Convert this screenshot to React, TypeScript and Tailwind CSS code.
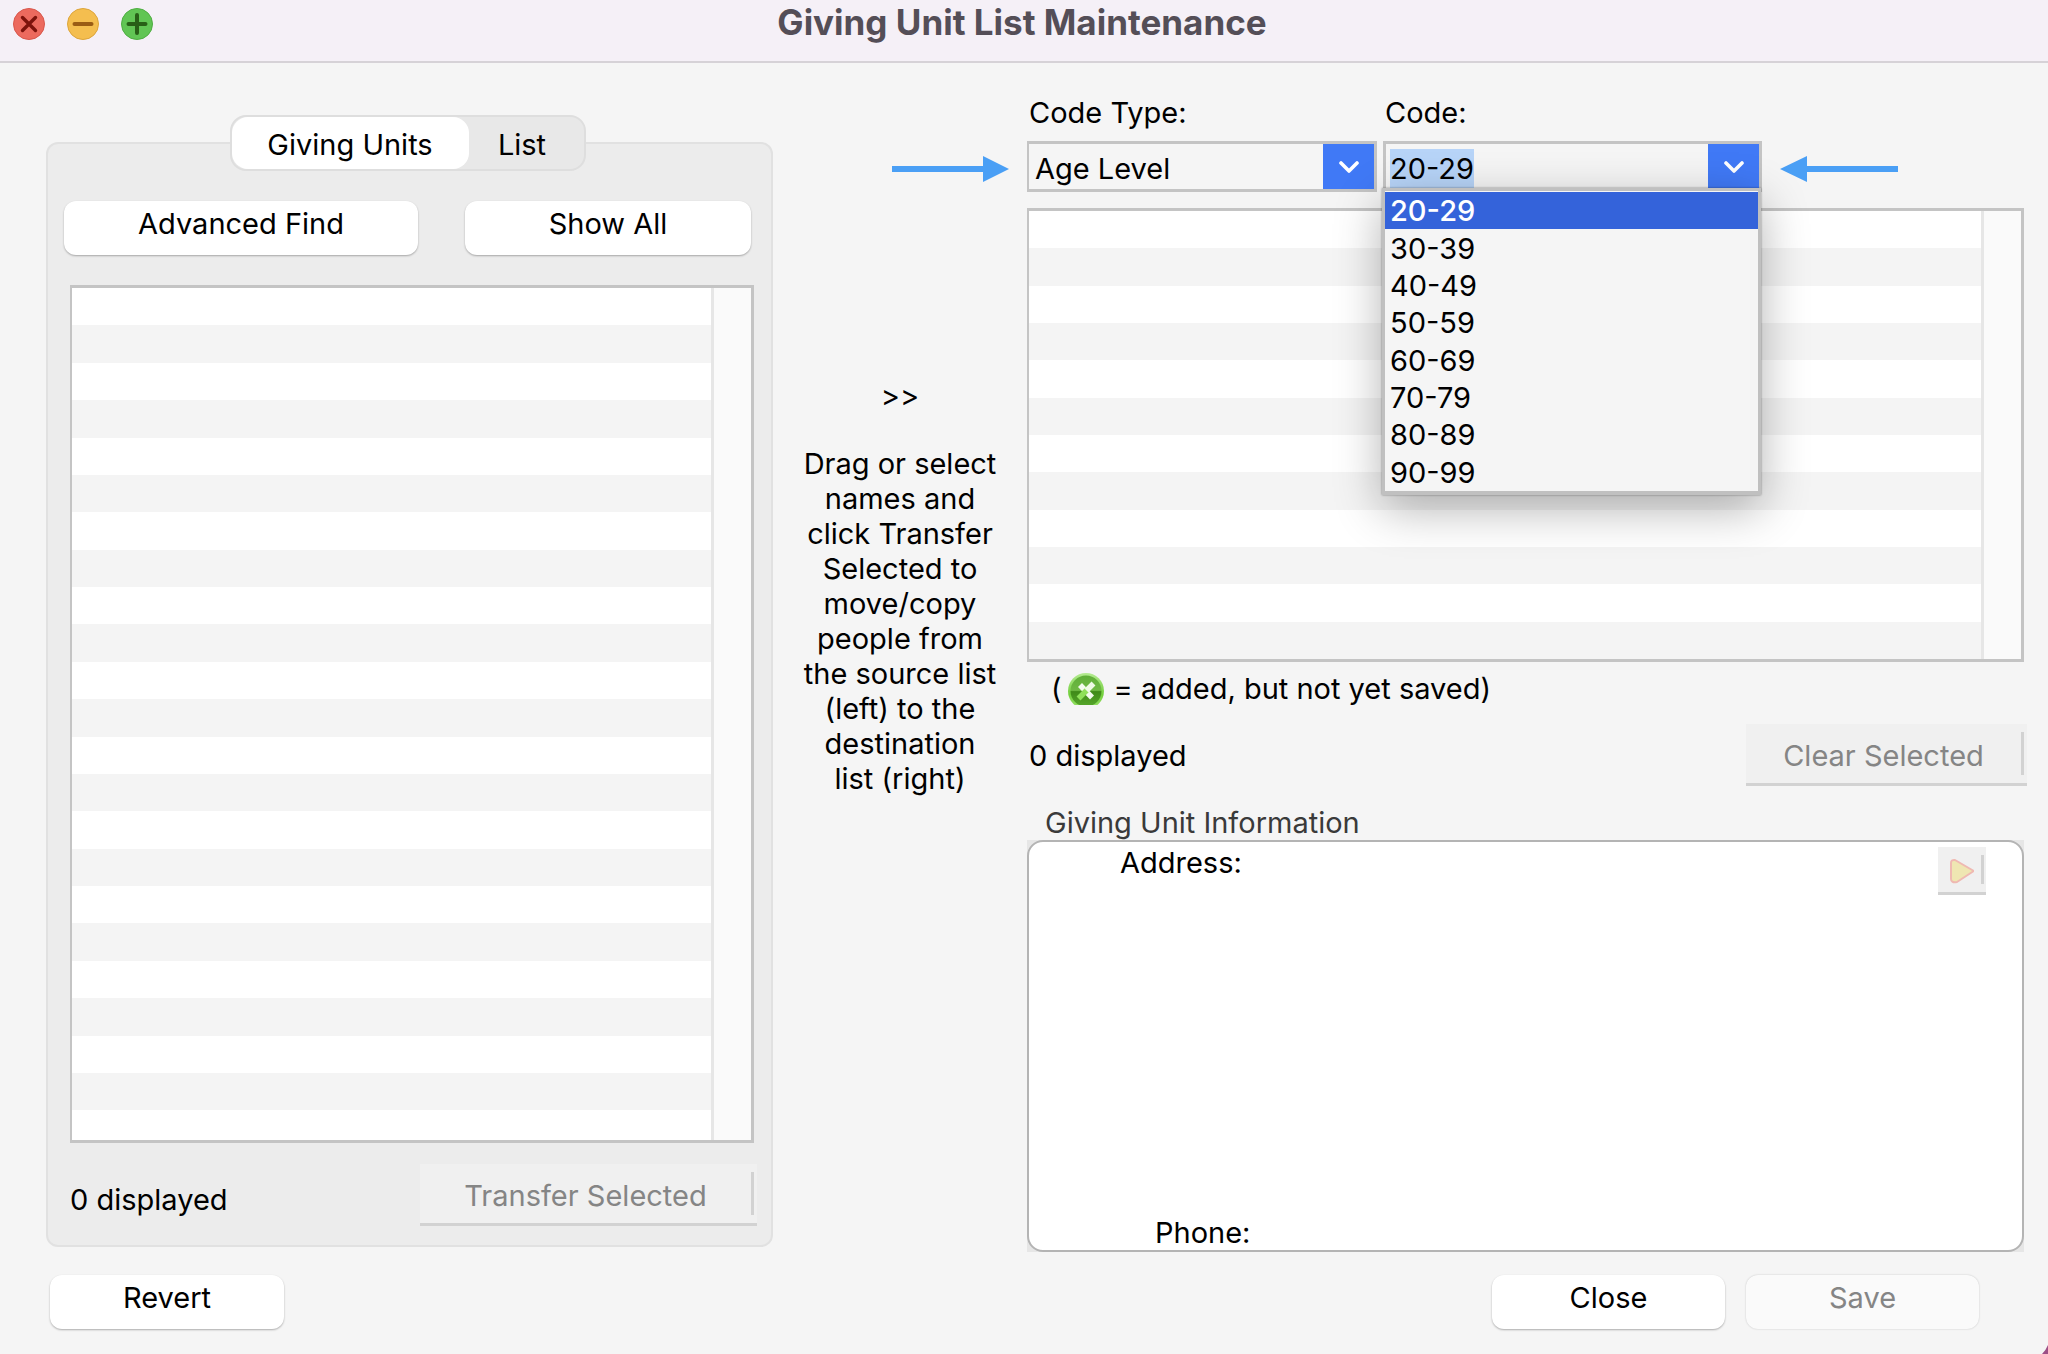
import { useEffect, useRef } from "react";
import type { ReactNode } from "react";

const ages = ["20-29", "30-39", "40-49", "50-59", "60-69", "70-79", "80-89", "90-99"];

function TrafficLights() {
  return (
    <div className="flex gap-[22px]">
      <button aria-label="Close window" className="size-8">
        <svg viewBox="0 0 32 32" className="size-8">
          <circle cx="16" cy="16" r="15.5" fill="#ec6a5e" stroke="#d8574c" />
          <path d="M9.500 9.500l13 13M22.500 9.500l-13 13" stroke="#7d130c" strokeWidth="3.400" strokeLinecap="round" />
        </svg>
      </button>
      <button aria-label="Minimize window" className="size-8">
        <svg viewBox="0 0 32 32" className="size-8">
          <circle cx="16" cy="16" r="15.5" fill="#f4be4f" stroke="#dda53b" />
          <path d="M7.500 16h17" stroke="#9a5c14" strokeWidth="4" strokeLinecap="round" />
        </svg>
      </button>
      <button aria-label="Zoom window" className="size-8">
        <svg viewBox="0 0 32 32" className="size-8">
          <circle cx="16" cy="16" r="15.5" fill="#61c554" stroke="#4fae42" />
          <path d="M7.500 16h17M16 7v18" stroke="#286017" strokeWidth="4" strokeLinecap="round" />
        </svg>
      </button>
    </div>
  );
}

function PushButton({ children, className, disabled }: { children: ReactNode; className: string; disabled?: boolean }) {
  return (
    <button
      disabled={disabled}
      className={`flex h-[54px] items-start justify-center rounded-xl bg-white pt-[5px] shadow-[0_1px_2px_rgba(0,0,0,0.3)] disabled:bg-[#fafafa] disabled:text-[#858585] disabled:shadow-[0_0_2px_rgba(0,0,0,0.2)] ${className}`}
    >
      {children}
    </button>
  );
}

function FlatButton({ children, className }: { children: ReactNode; className: string }) {
  return (
    <button
      disabled
      className={`flex items-stretch border-b-[3px] border-[#d2d2d2] bg-[#f0f0f0] py-2 pr-[3px] text-[#858585] ${className}`}
    >
      <span className="flex flex-1 items-center justify-center border-r-[3px] border-[#d2d2d2] pt-1">{children}</span>
    </button>
  );
}

function StripedList({ weights, className }: { weights: string[]; className: string }) {
  return (
    <div className={`flex border-[3px] border-[#c4c4c4] border-l-2 bg-white ${className}`}>
      <div className="flex flex-1 flex-col">
        {weights.map((w, i) => (
          <div key={i} className={`${w} ${i % 2 ? "bg-[#f4f4f4]" : "bg-white"}`} />
        ))}
      </div>
      <div className="w-10 border-l-[3px] border-[#e6e6e6] bg-[#fafafa]" />
    </div>
  );
}

function Chevron() {
  return (
    <svg viewBox="0 0 20 12" className="h-3 w-5" fill="none" stroke="#fff" strokeWidth="3.600" strokeLinecap="round" strokeLinejoin="round">
      <path d="M2 2l8 8 8-8" />
    </svg>
  );
}

function AddedIcon() {
  return (
    <svg viewBox="0 0 36 32" className="h-8 w-9" aria-label="added">
      <defs>
        <linearGradient id="rim" x1="0" y1="0" x2="0" y2="1">
          <stop offset="0" stopColor="#b5eb92" />
          <stop offset="0.600" stopColor="#72cf3c" />
          <stop offset="1" stopColor="#9be26c" />
        </linearGradient>
        <linearGradient id="core" x1="0" y1="0" x2="0" y2="1">
          <stop offset="0" stopColor="#5fae38" />
          <stop offset="0.480" stopColor="#6fb944" />
          <stop offset="0.520" stopColor="#3f8a18" />
          <stop offset="1" stopColor="#57a82c" />
        </linearGradient>
      </defs>
      <circle cx="18" cy="18" r="18" fill="url(#rim)" />
      <circle cx="18" cy="18" r="15.5" fill="url(#core)" />
      <path d="M12 12l12 12.500" stroke="#f3fbee" strokeWidth="5.500" strokeLinecap="butt" />
      <path d="M10.500 25.500l9-9" stroke="#8fe05a" strokeWidth="5.500" strokeLinecap="butt" />
      <path d="M18.500 17.500l7-7" stroke="#eefae5" strokeWidth="5.500" strokeLinecap="butt" />
    </svg>
  );
}

export default function App() {
  const code = useRef<HTMLInputElement>(null);
  useEffect(() => {
    code.current?.focus();
    code.current?.select();
  }, []);

  return (
    <div className="relative flex min-h-screen flex-col bg-[#f5f5f5] font-['Inter',sans-serif] text-[29px] leading-[35px] text-black">
      <header className="grid h-[63px] grid-cols-[1fr_auto_1fr] items-start border-b-2 border-[#d6d2d7] bg-[#f5f0f7] px-[13px]">
        <div className="pt-2">
          <TrafficLights />
        </div>
        <h1 className="pt-0.5 pr-1 text-[35px] leading-[40px] font-bold text-[#544e57]">Giving Unit List Maintenance</h1>
      </header>

      <main className="grid flex-1 grid-cols-[727fr_254fr_997fr] pr-6 pl-[46px]">
        <section className="flex flex-col pt-[52px] pb-[5px]">
          <div role="tablist" className="relative z-10 mr-1 -mb-[29px] flex h-14 self-center rounded-2xl border-2 border-[#dedede] bg-[#e8e8e8]">
            <button role="tab" aria-selected="true" className="w-[237px] rounded-2xl bg-white pt-0.5">
              Giving Units
            </button>
            <button role="tab" aria-selected="false" className="w-[115px] pt-0.5 pr-2">
              List
            </button>
          </div>
          <div className="flex flex-1 flex-col rounded-xl border-2 border-[#e1e1e1] bg-[#ececec] pt-[57px] pr-3 pb-[19px] pl-4">
            <div className="grid grid-cols-[354fr_286fr] gap-[47px] pr-2">
              <PushButton className="">Advanced Find</PushButton>
              <PushButton className="">Show All</PushButton>
            </div>
            <StripedList weights={[...Array<string>(22).fill("flex-[5]"), "flex-[4]"]} className="mt-[30px] mr-[5px] ml-1.5 flex-1" />
            <div className="mt-[21px] mr-0.5 flex h-[62px] items-center justify-between pl-1.5">
              <span className="pt-2">0 displayed</span>
              <FlatButton className="h-[62px] w-[337px]">Transfer Selected</FlatButton>
            </div>
          </div>
        </section>

        <section className="flex flex-col items-center pt-[93px]">
          <svg viewBox="0 0 117 26" className="mr-[18px] h-[26px] w-[117px] self-end" fill="#4a9ff5">
            <path d="M0 10h91V0l26 13-26 13V16H0z" />
          </svg>
          <p className="mt-[196px]">&gt;&gt;</p>
          <p className="mt-[33px] text-center">
            Drag or select
            <br />
            names and
            <br />
            click Transfer
            <br />
            Selected to
            <br />
            move/copy
            <br />
            people from
            <br />
            the source list
            <br />
            (left) to the
            <br />
            destination
            <br />
            list (right)
          </p>
        </section>

        <section className="flex flex-col pt-8">
          <div className="flex items-end">
            <div className="flex w-[350px] flex-col gap-[11px]">
              <label htmlFor="code-type" className="pl-0.5">
                Code Type:
              </label>
              <div className="relative flex h-[51px] border-[3px] border-[#c4c4c4] border-l-2">
                <select id="code-type" className="flex-1 appearance-none bg-[#f5f5f5] pt-1 pl-1.5">
                  <option>Age Level</option>
                </select>
                <span className="pointer-events-none absolute inset-y-0 right-0 flex w-[51px] items-center justify-center bg-[#4079f6]">
                  <Chevron />
                </span>
              </div>
            </div>
            <div className="ml-1.5 flex w-[379px] flex-col gap-[11px]">
              <label htmlFor="code" className="pl-0.5">
                Code:
              </label>
              <div className="relative flex h-[51px] border-[3px] border-[#c4c4c4]">
                <input
                  ref={code}
                  id="code"
                  role="combobox"
                  aria-expanded="true"
                  aria-controls="code-list"
                  defaultValue="20-29"
                  className="min-w-0 flex-1 bg-[#f5f5f5] pt-1 pl-1 leading-[40px] outline-none selection:bg-[#b7d4f8] selection:text-black"
                />
                <button aria-label="Toggle code list" className="flex w-[51px] items-center justify-center bg-[#4079f6]">
                  <Chevron />
                </button>
                <ul
                  id="code-list"
                  role="listbox"
                  className="absolute top-11 -right-0.5 -left-1 z-20 flex h-[307px] flex-col border-[3px] border-b-4 border-[#c0c0c0] bg-[#f5f5f5] pt-px shadow-[0_0_2px_rgba(0,0,0,0.4),0_14px_44px_rgba(0,0,0,0.3)]"
                >
                  {ages.map((a, i) => (
                    <li
                      key={a}
                      role="option"
                      aria-selected={i === 0}
                      className={i === 0 ? "flex flex-1 items-center bg-[#3463da] pl-[5px] font-medium text-white" : "flex flex-1 items-center pl-[5px]"}
                    >
                      {a}
                    </li>
                  ))}
                </ul>
              </div>
            </div>
            <svg viewBox="0 0 118 26" className="mb-[10px] ml-[18px] h-[26px] w-[118px]" fill="#4a9ff5">
              <path d="M118 10H27V0L0 13l27 13V16h91z" />
            </svg>
          </div>

          <StripedList weights={Array<string>(12).fill("flex-1")} className="mt-4 h-[454px]" />

          <div className="mt-[9px] flex pl-6">
            <span>(</span>
            <span className="mr-2.5 ml-1.5 pt-0.5">
              <AddedIcon />
            </span>
            <span>= added, but not yet saved)</span>
          </div>

          <div className="mt-[18px] -mr-[3px] flex h-[62px] items-center justify-between pl-0.5">
            <span>0 displayed</span>
            <FlatButton className="h-[62px] w-[281px]">Clear Selected</FlatButton>
          </div>

          <h2 className="mt-[19px] pl-[18px] text-[#3a3a3a]">Giving Unit Information</h2>
          <div className="flex flex-1 bg-[#e6e6e6]">
            <div className="flex flex-1 justify-between rounded-2xl border-2 border-[#b4b4b4] bg-white pt-[3px] pr-9">
              <div className="flex flex-col justify-between">
                <span className="pl-[91px]">Address:</span>
                <span className="pl-[126px]">Phone:</span>
              </div>
              <button disabled aria-label="Go to giving unit" className="mt-0.5 flex h-12 w-12 border-b-[3px] border-[#d2d2d2] bg-[#f0f0f0] py-2 pr-0.5">
                <span className="flex flex-1 items-center justify-center border-r-[3px] border-[#d2d2d2] pt-0.5 pl-1">
                  <svg viewBox="0 0 26 26" className="size-[26px]">
                    <path d="M2 5Q2 1.500 6 2L24 12.500 24 13.500 8 24Q2 25 2 21z" fill="#efe6b2" stroke="#efb9b2" strokeWidth="2" strokeLinejoin="round" />
                  </svg>
                </span>
              </button>
            </div>
          </div>
        </section>
      </main>

      <footer className="flex gap-[21px] pt-[23px] pr-[69px] pb-[25px] pl-[50px]">
        <PushButton className="mr-auto w-[234px]">Revert</PushButton>
        <PushButton className="w-[233px]">Close</PushButton>
        <PushButton disabled className="w-[233px]">
          Save
        </PushButton>
      </footer>
      <svg viewBox="0 0 6 9" className="absolute right-0 bottom-0 h-[9px] w-1.5" fill="#9c4f86">
        <path d="M6 0v9H0Q4 5 6 0z" />
      </svg>
    </div>
  );
}
